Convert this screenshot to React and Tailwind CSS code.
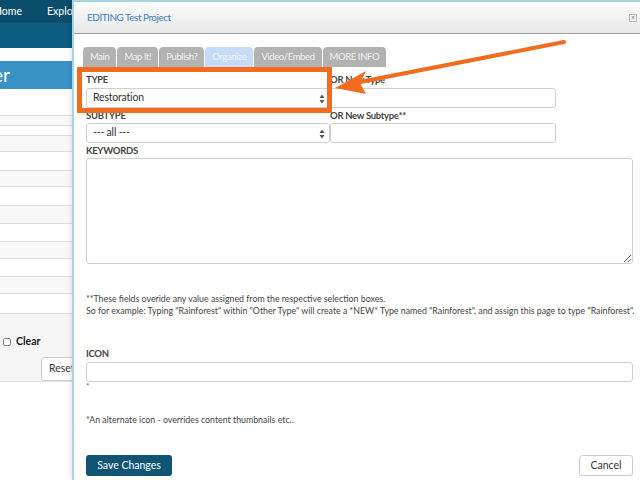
import React from "react";

function Arrows() {
  return (
    <svg width="6" height="10" viewBox="0 0 6 10" className="absolute right-[4px] top-[5px]">
      <path d="M3 0.5 L5.5 4 L0.5 4 Z" fill="#555" />
      <path d="M3 9.5 L5.5 6 L0.5 6 Z" fill="#555" />
    </svg>
  );
}

export default function App() {
  const rows = [27, 10, 10, 16, 19, 16, 19, 18, 18, 17, 18, 17, 20];
  const tabs = ["Main", "Map It!", "Publish?", "Organize", "Video/Embed", "MORE INFO"];
  const label = "text-[9.5px] font-bold text-[#444] tracking-[-0.3px] whitespace-nowrap";
  return (
    <div className="relative w-[640px] h-[480px] overflow-hidden bg-white font-['Lato','Liberation_Sans',sans-serif]">
      {/* background page */}
      <div className="flex flex-col w-[640px]">
        <div className="h-[23px] bg-[#0b4e6b] flex items-center text-white text-[10.5px]">
          <div className="w-[22px] flex justify-end whitespace-nowrap">Home</div>
          <div className="ml-[25px] whitespace-nowrap">Explore</div>
        </div>
        <div className="h-[25px] bg-[#0e5b80]"></div>
        <div className="h-[13px] bg-white"></div>
        <div className="h-[28px] bg-[#3892c6] flex items-center text-white text-[19px]">
          <div className="w-[10px] flex justify-end whitespace-nowrap">Filter</div>
        </div>
        <div className="flex flex-col">
          {rows.map((h, i) => (
            <div
              key={i}
              style={{ height: h }}
              className={i % 2 === 0 ? "bg-white border-b border-[#dcdcdc]" : "bg-[#f8f8f8] border-b border-[#dcdcdc]"}
            ></div>
          ))}
        </div>
        <div className="h-[68px] bg-[#f5f5f5] border-b border-[#e3e3e3] flex flex-col">
          <div className="flex items-center mt-[20px] ml-[3px] gap-[5px]">
            <div className="w-[8px] h-[8px] border border-[#888] rounded-[2px] bg-white"></div>
            <span className="text-[10.5px] font-bold text-[#222]">Clear</span>
          </div>
          <div className="ml-[41px] mt-[7px] h-[25px] w-[60px] bg-white border border-[#ccc] rounded-[3px] flex items-center pl-[7px] text-[10.5px] text-[#333]">
            Reset
          </div>
        </div>
      </div>

      {/* modal */}
      <div className="absolute left-[72px] top-0 w-[568px] h-[480px] border-l-2 border-t-2 border-[#a8d4e4] bg-white flex flex-col shadow-[0_0_6px_rgba(0,0,0,0.15)]">
        <div className="h-[32px] bg-gradient-to-b from-[#fbfbfb] to-[#e8e8e8] border-b border-[#a0a0a0] flex items-center justify-between pl-[13px] pr-[3px]">
          <span className="text-[10px] text-[#3f7fbf] tracking-[-0.5px]">EDITING Test Project</span>
          <div className="w-[8px] h-[8px] border border-[#bbb] bg-[#f4f4f4] flex items-center justify-center text-[7px] leading-none text-[#777]">×</div>
        </div>
        <div className="flex flex-col pl-[12px] pr-[7px] pt-[13px]">
          <div className="flex gap-[1px] ml-[-3px]">
            {tabs.map((t) => (
              <div
                key={t}
                className={
                  t === "Organize"
                    ? "h-[20px] px-[7px] rounded-t-[4px] bg-[#c6dbf6] text-[#eef4ff] text-[9.5px] tracking-[-0.4px] flex items-center whitespace-nowrap"
                    : "h-[20px] px-[7px] rounded-t-[4px] bg-[#b2b2b2] text-[#f1f1f1] text-[9.5px] tracking-[-0.4px] flex items-center whitespace-nowrap"
                }
              >
                {t}
              </div>
            ))}
          </div>

          <div className="grid grid-cols-[244px_226px] mt-[6px]">
            <div className="flex flex-col">
              <div className={"h-[14px] leading-[14px] " + label}>TYPE</div>
              <div className="relative mt-[1px] h-[20px] border border-[#cfcfcf] rounded-[3px] bg-white flex items-center pl-[6px] text-[10.5px] tracking-[-0.2px] text-[#333]">
                Restoration
                <Arrows />
              </div>
              <div className={"h-[15px] leading-[15px] " + label}>SUBTYPE</div>
              <div className="relative h-[20px] border border-[#cfcfcf] rounded-[3px] bg-white flex items-center pl-[6px] text-[10.5px] tracking-[-0.2px] text-[#333]">
                --- all ---
                <Arrows />
              </div>
            </div>
            <div className="flex flex-col">
              <div className={"h-[14px] leading-[14px] " + label}>OR New Type</div>
              <div className="mt-[1px] h-[20px] border border-[#cfcfcf] rounded-[3px] bg-white"></div>
              <div className={"h-[15px] leading-[15px] " + label}>OR New Subtype**</div>
              <div className="h-[20px] border border-[#cfcfcf] rounded-[3px] bg-white"></div>
            </div>
          </div>

          <div className={"h-[15px] leading-[15px] " + label}>KEYWORDS</div>
          <textarea className="h-[106px] w-[547px] border border-[#cfcfcf] rounded-[3px] bg-white outline-none"></textarea>

          <div className="mt-[29px] text-[8.8px] leading-[12px] text-[#444] whitespace-nowrap">
            <div>**These fields overide any value assigned from the respective selection boxes.</div>
            <div>So for example: Typing "Rainforest" within "Other Type" will create a *NEW* Type named "Rainforest", and assign this page to type "Rainforest".</div>
          </div>

          <div className={"mt-[30px] h-[14px] leading-[14px] " + label}>ICON</div>
          <div className="mt-[1px] h-[20px] w-[547px] border border-[#cfcfcf] rounded-[3px] bg-white"></div>
          <div className="h-[8px] leading-[8px] text-[8px] text-[#666]">*</div>
          <div className="mt-[24px] h-[12px] leading-[12px] text-[8.8px] text-[#444]">*An alternate icon - overrides content thumbnails etc..</div>

          <div className="mt-[29px] flex justify-between w-[547px]">
            <div className="h-[21px] w-[86px] bg-[#0f5473] rounded-[3px] text-white text-[10.5px] flex items-center justify-center">Save Changes</div>
            <div className="h-[21px] w-[54px] bg-white border border-[#ccc] rounded-[3px] text-[#333] text-[10.5px] flex items-center justify-center">Cancel</div>
          </div>
        </div>
      </div>

      {/* annotation */}
      <div className="absolute left-[77px] top-[67px] w-[255px] h-[46px] border-[5px] border-[#f26c1f] pointer-events-none"></div>
      <svg className="absolute left-0 top-0 pointer-events-none" width="640" height="480" viewBox="0 0 640 480">
        <line x1="564" y1="42" x2="355" y2="83" stroke="#f26c1f" strokeWidth="4" strokeLinecap="round" />
        <path d="M335 88 L366 71 L360 83 L366 94 Z" fill="#f26c1f" />
      </svg>
    </div>
  );
}
